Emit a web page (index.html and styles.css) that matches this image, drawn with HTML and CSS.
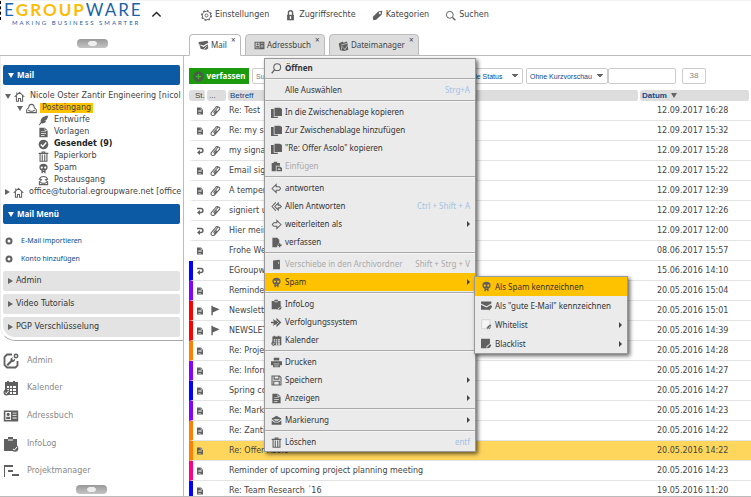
FILE: index.html
```html
<!DOCTYPE html>
<html lang="de">
<head>
    <meta charset="UTF-8">
    <meta name="viewport" content="width=device-width, initial-scale=1.0">
    <title>EGroupware - Mail</title>
    <link rel="stylesheet" href="styles.css">
</head>
<body>

    <svg class="sprite" aria-hidden="true">
        <symbol id="gear" viewBox="0 0 16 16"><circle cx="8" cy="8" r="6.2" fill="none" stroke="currentColor" stroke-width="1.4"/><circle cx="8" cy="8" r="7.2" fill="none" stroke="currentColor" stroke-width="1.6" stroke-dasharray="2.6 3"/><circle cx="8" cy="8" r="2.2" fill="none" stroke="currentColor" stroke-width="1.3"/></symbol>
        <symbol id="lock" viewBox="0 0 16 16"><path d="M3 7h10v8H3z"/><path d="M5 8V4a3 3 0 0 1 6 0v4" fill="none" stroke="currentColor" stroke-width="2"/><path d="M7 9h2v4H7z" fill="#fff"/></symbol>
        <symbol id="tag" viewBox="0 0 16 16"><path fill-rule="evenodd" d="M15 1 9 2 1 10l1 5 4-1 8-7zM11.500 3a1.500 1.500 0 1 1 0 3 1.500 1.500 0 0 1 0-3z"/></symbol>
        <symbol id="search" viewBox="0 0 16 16"><circle cx="7" cy="7" r="5" fill="none" stroke="currentColor" stroke-width="1.4"/><path d="m11 11 4 4" stroke="currentColor" stroke-width="2"/></symbol>
        <symbol id="find" viewBox="0 0 16 16"><circle cx="9" cy="6" r="5" fill="none" stroke="currentColor" stroke-width="1.5"/><path d="m5 10-4 5" stroke="currentColor" stroke-width="2"/></symbol>
        <symbol id="mail" viewBox="0 0 16 16"><path d="m1 3 13-2 1 3-7 4-7-2z"/><path d="m2 7 6 3 6-4 1 6-3 2-8-1z"/><path d="m9 13 4-4" stroke="#fff" stroke-width="1.200"/></symbol>
        <symbol id="card" viewBox="0 0 20 16"><path fill-rule="evenodd" d="M1 1h18v14H1zm2 2v10h7V3zm9 1v1h5V4zm0 3v1h5V7zm0 3v1h5v-1z"/><circle cx="6.500" cy="6" r="2"/><path d="M4 12V9h5v3z"/></symbol>
        <symbol id="files" viewBox="0 0 16 16"><path d="m1 5 6-3 1 2 5-2 1 4 1 8-6 2-6-1z"/><path d="m5 7 8-2M6 8l-1 6m3-3 2 3 4-6" fill="none" stroke="#ddd"/></symbol>
        <symbol id="home" viewBox="0 0 16 16"><path d="M1 8.500 8 2l7 6.500M3.500 7v8h3v-4h3v4h3V7M4 5V2" fill="none" stroke="currentColor" stroke-width="1.500"/></symbol>
        <symbol id="inbox" viewBox="0 0 16 16"><path d="M1 10c0-2 2-2 3-3 0-3 1-5 4-5s4 2 4 5c1 1 3 1 3 3v4H1zm2 0 3 2h4l3-2" fill="none" stroke="currentColor" stroke-width="1.500"/></symbol>
        <symbol id="quill" viewBox="0 0 16 16"><path d="M15 1C8 1 3 5 4 10l-3 5h1.500L5 12c5 1 6-2 7-4l-3 .5 4-2z"/></symbol>
        <symbol id="doc" viewBox="0 0 16 16"><path fill-rule="evenodd" d="M2 1h8l4 4v10H2zm2.500 5v1h7V6zm0 3v1h7V9zm0 3v1h5v-1z"/><path d="M10 1v4h4" fill="none" stroke="#eee"/></symbol>
        <symbol id="check" viewBox="0 0 16 16"><circle cx="8" cy="8" r="7"/><path d="m4 8 3 3 5-6" fill="none" stroke="#fff" stroke-width="2"/></symbol>
        <symbol id="trash" viewBox="0 0 16 16"><path d="M1 3.500h14M6 3V1.500h4V3M3 4v11h10V4M6.200 5v9M9.800 5v9" fill="none" stroke="currentColor" stroke-width="1.600"/></symbol>
        <symbol id="skull" viewBox="0 0 16 16"><path fill-rule="evenodd" d="M8 1c4 0 6 2 6 5 0 2-1 4-3 5v4H9v-2H7v2H5v-4C3 10 2 8 2 6c0-3 2-5 6-5zM5.500 5a1.600 1.600 0 1 0 0 3.200 1.600 1.600 0 0 0 0-3.200zm5 0a1.600 1.600 0 1 0 0 3.200 1.600 1.600 0 0 0 0-3.200zM7 10h2v1H7z"/></symbol>
        <symbol id="outbox" viewBox="0 0 16 16"><path d="M2 6c2-5 10-5 12 0l-3 1 3 3v4H2v-4l3-3zM2 10l4 2h4l4-2" fill="none" stroke="currentColor" stroke-width="1.600"/></symbol>
        <symbol id="dot" viewBox="0 0 16 16"><circle cx="8" cy="8" r="5" fill="none" stroke="currentColor" stroke-width="4"/></symbol>
        <symbol id="admin" viewBox="0 0 16 16"><path d="M9 1.500H4L1.500 4v8L4 14.500h8.500l2-2V8" fill="none" stroke="currentColor" stroke-width="1.800"/><path d="m5 13-1.500-1.500 4-4C7 5 9 4 10 4.500L9 6l1.500 1L12 5.500c.5 2-1 4-3 3.500z"/><circle cx="13" cy="3" r="1.700" fill="none" stroke="currentColor" stroke-width="1.500"/></symbol>
        <symbol id="calendar" viewBox="0 0 16 16"><path fill-rule="evenodd" d="M2 2h2V1h2v1h4V1h2v1h3v13H2zm2 4v2h2V6zm3 0v2h2V6zm3 0v2h3V6zM4 9v2h2V9zm3 0v2h2V9zm3 0v2h3V9zm-3 3v2h2v-2zm3 0v2h3v-2z"/><circle cx="3.500" cy="12.500" r="3"/><path d="m2 12.500 1.300 1.300L5.500 11" fill="none" stroke="#fff"/></symbol>
        <symbol id="clipboard" viewBox="0 0 16 16"><path d="M1 3h4V1h5v2h4v7l-3 1-1 4H1z"/><circle cx="12" cy="12.500" r="3.300"/><path d="m10 13 1.500 1L14 11M5 4h5" fill="none" stroke="#fff"/></symbol>
        <symbol id="gantt" viewBox="0 0 16 16"><path d="M1 2h1v12H1zM1 2h9v2H1zM5 7h5v2H5zM9 11h7v2H9z"/></symbol>
        <symbol id="plus" viewBox="0 0 16 16"><circle cx="8" cy="8" r="7.500" fill="#4c5a49"/><path d="M8 4v8M4 8h8" stroke="#35b828" stroke-width="2"/></symbol>
        <symbol id="clip" viewBox="0 0 16 16"><path d="m5 11 6-7c2-2 4 0 3 2l-7 8c-3 3-7 0-5-3l6-7c1-2 3-2 4-1m-2 5-4 5" fill="none" stroke="currentColor" stroke-width="1.500"/></symbol>
        <symbol id="reply" viewBox="0 0 16 16"><path d="M2 3h8c5 0 5 8 0 8H7" fill="none" stroke="currentColor" stroke-width="3"/><path d="M8 6v10l-6-5z"/></symbol>
        <symbol id="flag" viewBox="0 0 16 16"><path d="M2 1h2v14H2zM4 2l10 4-10 5z"/></symbol>
        <symbol id="copy" viewBox="0 0 16 16"><path d="M0 3h4v11h6v2H0z"/><path d="M5 1h8l3 2v10H5z"/></symbol>
        <symbol id="paste" viewBox="0 0 16 16"><path d="M1 3h3V1h5v2h4v4H7v8H1z"/><path fill-rule="evenodd" d="M8 8h5l3 2v5H8zm2 2v1h3v-1zm0 2v1h4v-1z"/></symbol>
        <symbol id="left" viewBox="0 0 16 16"><path d="m1.500 8 6-6v3.500H12L14 8l-2 2.500H7.500V14z" fill="none" stroke="currentColor" stroke-width="1.500"/></symbol>
        <symbol id="left2" viewBox="0 0 16 16"><path d="M7 2 1.500 8 7 14m-1.500-6 5-5v3H13l2 2-2 2h-2.500v3z" fill="none" stroke="currentColor" stroke-width="1.500"/></symbol>
        <symbol id="right" viewBox="0 0 16 16"><path d="m14.500 8-6-6v3.500H4L2 8l2 2.500h4.500V14z" fill="none" stroke="currentColor" stroke-width="1.500"/></symbol>
        <symbol id="compose" viewBox="0 0 16 16"><path d="M2 1h7l3 3v5l-3 3v3H2z"/><path d="M12.500 9v6m-3-3h6" stroke="currentColor" stroke-width="2"/></symbol>
        <symbol id="archive" viewBox="0 0 16 16"><path d="m3 2 9-1 1 1v13H3z"/><path d="M11 4v3" stroke="#eee"/></symbol>
        <symbol id="tracker" viewBox="0 0 16 16"><path d="m8 1 7 7-7 7v-4H6l-3 2 1-4H0V7h4L3 3l3 2h2z"/><path d="m8 5 3 3-3 3" fill="none" stroke="#eee" stroke-width="1.200"/></symbol>
        <symbol id="print" viewBox="0 0 16 16"><path d="M4 1h8v4H4zM0 6h16v6h-3v3H3v-3H0z"/><path d="M4 10h8M5 13h6" stroke="#eee"/></symbol>
        <symbol id="save" viewBox="0 0 16 16"><path d="M1.500 1.500h11l2 2v11h-13zM4.500 2v4h7V2M4 14V9h8v5" fill="none" stroke="currentColor" stroke-width="1.600"/></symbol>
        <symbol id="envelope" viewBox="0 0 16 16"><path d="M8 1 1 5v1h14V5zM1 8l4 3h6l4-3v6H1z"/><path d="m2 6 4 3h4l4-3" fill="none" stroke="currentColor" stroke-width="1.500"/></symbol>
        <symbol id="goodmail" viewBox="0 0 16 16"><path d="M0 2h15v3L8 9 0 5zM0 7l8 4 7-4v3l-4 4H0z"/><path d="m10 12 2 2 4-5" fill="none" stroke="currentColor" stroke-width="1.500"/></symbol>
        <symbol id="white" viewBox="0 0 16 16"><path d="M1 1h12v13H1z" fill="#f5f5f5" stroke="#ccc"/><path d="M8 12.500 13 8l2 1-2 5-4 1z"/><path d="m9 13 2 1 3-4" fill="none" stroke="#eee"/></symbol>
        <symbol id="black" viewBox="0 0 16 16"><path d="M0 1h13v7l-5 4v3H0z"/><path d="m9 13 4-4 2 1-2 4-4 1z"/></symbol>
        <symbol id="up" viewBox="0 0 16 16"><path d="m2 11 6-6 6 6" fill="none" stroke="currentColor" stroke-width="2"/></symbol>
    </svg>

    <div class="app">
        <header class="top">
            <div class="brand">
                <div class="logo">
                    <div class="logo-name">E<b>GROUP</b>WARE</div>
                    <div class="logo-claim">MAKING BUSINESS SMARTER</div>
                </div>
                <button class="collapse" aria-label="Kopfzeile einklappen"><svg class="icon"><use href="#up"/></svg></button>
                <button class="grip grip-top" aria-label="Seitenleiste"></button>
            </div>
            <div class="top-main">
                <nav class="top-nav">
                    <a href="#"><svg class="icon"><use href="#gear"/></svg>Einstellungen</a>
                    <a href="#"><svg class="icon"><use href="#lock"/></svg>Zugriffsrechte</a>
                    <a href="#"><svg class="icon"><use href="#tag"/></svg>Kategorien</a>
                    <a href="#"><svg class="icon"><use href="#search"/></svg>Suchen</a>
                </nav>
                <div class="tabs">
                    <div class="tab active"><a href="#"><svg class="icon"><use href="#mail"/></svg>Mail</a><button class="close" aria-label="Mail schließen">×</button></div>
                    <div class="tab"><a href="#"><svg class="icon"><use href="#card"/></svg>Adressbuch</a><button class="close" aria-label="Adressbuch schließen">×</button></div>
                    <div class="tab"><a href="#"><svg class="icon"><use href="#files"/></svg>Dateimanager</a><button class="close" aria-label="Dateimanager schließen">×</button></div>
                </div>
            </div>
        </header>

        <div class="body">
            <aside class="sidebar">
                <div class="sidebox">
                    <button class="bar open"><span class="tri down"></span>Mail</button>
                    <ul class="tree">
                        <li><span class="tri down"></span><svg class="icon"><use href="#home"/></svg><a href="#">Nicole Oster Zantir Engineering [nicol</a></li>
                        <li class="level1"><span class="tri down"></span><svg class="icon"><use href="#inbox"/></svg><a href="#" class="current">Posteingang</a></li>
                        <li class="level2"><svg class="icon"><use href="#quill"/></svg><a href="#">Entwürfe</a></li>
                        <li class="level2"><svg class="icon"><use href="#doc"/></svg><a href="#">Vorlagen</a></li>
                        <li class="level2"><svg class="icon"><use href="#check"/></svg><a href="#" class="unread">Gesendet (9)</a></li>
                        <li class="level2"><svg class="icon"><use href="#trash"/></svg><a href="#">Papierkorb</a></li>
                        <li class="level2"><svg class="icon"><use href="#skull"/></svg><a href="#">Spam</a></li>
                        <li class="level2"><svg class="icon"><use href="#outbox"/></svg><a href="#">Postausgang</a></li>
                        <li><span class="tri"></span><svg class="icon"><use href="#home"/></svg><a href="#">office@tutorial.egroupware.net [office</a></li>
                    </ul>
                    <button class="bar open"><span class="tri down"></span>Mail Menü</button>
                    <ul class="links">
                        <li><svg class="icon"><use href="#dot"/></svg><a href="#">E-Mail importieren</a></li>
                        <li><svg class="icon"><use href="#dot"/></svg><a href="#">Konto hinzufügen</a></li>
                    </ul>
                    <button class="bar"><span class="tri"></span>Admin</button>
                    <button class="bar"><span class="tri"></span>Video Tutorials</button>
                    <button class="bar last"><span class="tri"></span>PGP Verschlüsselung</button>
                </div>
                <nav class="apps">
                    <a href="#"><svg class="icon"><use href="#admin"/></svg>Admin</a>
                    <a href="#"><svg class="icon"><use href="#calendar"/></svg>Kalender</a>
                    <a href="#"><svg class="icon"><use href="#card"/></svg>Adressbuch</a>
                    <a href="#"><svg class="icon"><use href="#clipboard"/></svg>InfoLog</a>
                    <a href="#"><svg class="icon"><use href="#gantt"/></svg>Projektmanager</a>
                </nav>
                <button class="grip" aria-label="Anwendungen"></button>
            </aside>

            <main class="content">
                <div class="toolbar">
                    <button class="compose"><svg class="icon"><use href="#plus"/></svg>verfassen</button>
                    <input class="search" type="text" placeholder="Suche" aria-label="Suche">
                    <select class="status" aria-label="Status"><option>Alle Status</option></select>
                    <div class="joined">
                        <select class="preview" aria-label="Vorschau"><option>Ohne Kurzvorschau</option></select>
                        <input class="filter" type="text" aria-label="Filter">
                    </div>
                    <span class="total">38</span>
                </div>

                <table class="mails">
                    <thead>
                        <tr><th class="col-status">St.</th><th class="col-att">...</th><th class="col-subject"><a href="#">Betreff</a></th><th class="col-date"><a href="#">Datum</a><span class="tri down"></span></th></tr>
                    </thead>
                    <tbody>
                        <tr><td><svg class="icon"><use href="#doc"/></svg></td><td><svg class="icon"><use href="#clip"/></svg></td><td>Re: Test</td><td>12.09.2017 16:28</td></tr>
                        <tr><td><svg class="icon"><use href="#doc"/></svg></td><td><svg class="icon"><use href="#clip"/></svg></td><td>Re: my signature</td><td>12.09.2017 15:32</td></tr>
                        <tr><td><svg class="icon"><use href="#reply"/></svg></td><td><svg class="icon"><use href="#clip"/></svg></td><td>my signature</td><td>12.09.2017 15:28</td></tr>
                        <tr><td><svg class="icon"><use href="#doc"/></svg></td><td><svg class="icon"><use href="#clip"/></svg></td><td>Email signature</td><td>12.09.2017 15:22</td></tr>
                        <tr><td><svg class="icon"><use href="#doc"/></svg></td><td><svg class="icon"><use href="#clip"/></svg></td><td>A temperature</td><td>12.09.2017 12:39</td></tr>
                        <tr><td><svg class="icon"><use href="#reply"/></svg></td><td><svg class="icon"><use href="#clip"/></svg></td><td>signiert und</td><td>12.09.2017 12:26</td></tr>
                        <tr><td><svg class="icon"><use href="#reply"/></svg></td><td><svg class="icon"><use href="#clip"/></svg></td><td>Hier meine</td><td>12.09.2017 12:00</td></tr>
                        <tr><td><svg class="icon"><use href="#doc"/></svg></td><td></td><td>Frohe Weihnachten</td><td>08.06.2017 15:57</td></tr>
                        <tr class="blue"><td><svg class="icon"><use href="#reply"/></svg></td><td></td><td>EGroupware</td><td>15.06.2016 14:10</td></tr>
                        <tr class="violet"><td><svg class="icon"><use href="#doc"/></svg></td><td></td><td>Reminder</td><td>20.05.2016 15:04</td></tr>
                        <tr class="red"><td><svg class="icon"><use href="#doc"/></svg></td><td><svg class="icon"><use href="#flag"/></svg></td><td>Newsletter</td><td>20.05.2016 15:01</td></tr>
                        <tr class="red"><td><svg class="icon"><use href="#doc"/></svg></td><td><svg class="icon"><use href="#flag"/></svg></td><td>NEWSLETTER</td><td>20.05.2016 14:39</td></tr>
                        <tr class="orange"><td><svg class="icon"><use href="#doc"/></svg></td><td></td><td>Re: Project</td><td>20.05.2016 14:28</td></tr>
                        <tr class="violet"><td><svg class="icon"><use href="#doc"/></svg></td><td></td><td>Re: Information</td><td>20.05.2016 14:27</td></tr>
                        <tr class="blue"><td><svg class="icon"><use href="#doc"/></svg></td><td></td><td>Spring collection</td><td>20.05.2016 14:27</td></tr>
                        <tr class="violet"><td><svg class="icon"><use href="#doc"/></svg></td><td></td><td>Re: Marketing</td><td>20.05.2016 14:23</td></tr>
                        <tr class="orange"><td><svg class="icon"><use href="#doc"/></svg></td><td></td><td>Re: Zantir</td><td>20.05.2016 14:22</td></tr>
                        <tr class="orange selected"><td><svg class="icon"><use href="#doc"/></svg></td><td></td><td>Re: Offer Asolo</td><td>20.05.2016 14:22</td></tr>
                        <tr class="pink"><td><svg class="icon"><use href="#doc"/></svg></td><td></td><td>Reminder of upcoming project planning meeting</td><td>20.05.2016 14:23</td></tr>
                        <tr class="blue"><td><svg class="icon"><use href="#doc"/></svg></td><td></td><td>Re: Team Research ´16</td><td>19.05.2016 11:20</td></tr>
                    </tbody>
                </table>
            </main>
        </div>
    </div>

    <div class="menu context">
        <button class="default"><svg class="icon"><use href="#find"/></svg>Öffnen</button>
        <hr>
        <button><svg class="icon"></svg>Alle Auswählen<kbd>Strg+A</kbd></button>
        <hr>
        <button><svg class="icon"><use href="#copy"/></svg>In die Zwischenablage kopieren</button>
        <button><svg class="icon"><use href="#copy"/></svg>Zur Zwischenablage hinzufügen</button>
        <button><svg class="icon"><use href="#copy"/></svg>"Re: Offer Asolo" kopieren</button>
        <button disabled><svg class="icon"><use href="#paste"/></svg>Einfügen</button>
        <hr>
        <button><svg class="icon"><use href="#left"/></svg>antworten</button>
        <button><svg class="icon"><use href="#left2"/></svg>Allen Antworten<kbd>Ctrl + Shift + A</kbd></button>
        <button class="more"><svg class="icon"><use href="#right"/></svg>weiterleiten als</button>
        <button><svg class="icon"><use href="#compose"/></svg>verfassen</button>
        <hr>
        <button disabled><svg class="icon"><use href="#archive"/></svg>Verschiebe in den Archivordner<kbd>Shift + Strg + V</kbd></button>
        <button class="more hover"><svg class="icon"><use href="#skull"/></svg>Spam</button>
        <hr>
        <button><svg class="icon"><use href="#clipboard"/></svg>InfoLog</button>
        <button><svg class="icon"><use href="#tracker"/></svg>Verfolgungssystem</button>
        <button><svg class="icon"><use href="#calendar"/></svg>Kalender</button>
        <hr>
        <button><svg class="icon"><use href="#print"/></svg>Drucken</button>
        <button class="more"><svg class="icon"><use href="#save"/></svg>Speichern</button>
        <button class="more"><svg class="icon"><use href="#doc"/></svg>Anzeigen</button>
        <hr>
        <button class="more"><svg class="icon"><use href="#envelope"/></svg>Markierung</button>
        <hr>
        <button><svg class="icon"><use href="#trash"/></svg>Löschen<kbd>entf</kbd></button>
    </div>

    <div class="menu submenu">
        <button class="hover"><svg class="icon"><use href="#skull"/></svg>Als Spam kennzeichnen</button>
        <button><svg class="icon"><use href="#goodmail"/></svg>Als "gute E-Mail" kennzeichnen</button>
        <button class="more"><svg class="icon"><use href="#white"/></svg>Whitelist</button>
        <button class="more"><svg class="icon"><use href="#black"/></svg>Blacklist</button>
    </div>

</body>
</html>
```

FILE: styles.css
```css
* {
    box-sizing: border-box;
}

body {
    margin: 0;
    font-family: "DejaVu Sans", Verdana, sans-serif;
    font-size: 8px;
    line-height: 12px;
    color: #444;
    background: #fff;
    overflow: hidden;
}

a {
    color: inherit;
    text-decoration: none;
}

button {
    font: inherit;
    color: inherit;
    border: none;
    padding: 0;
    cursor: pointer;
}

ul {
    list-style: none;
    margin: 0;
    padding: 0;
}

.sprite {
    display: none;
}

.icon {
    width: 11px;
    height: 11px;
    flex: none;
    color: #606060;
    fill: currentColor;
}

.tri {
    flex: none;
    border: solid transparent;
    border-width: 3px 0 3px 5px;
    border-left-color: #666;
}

.tri.down {
    border-width: 5px 3px 0;
    border-color: #666 transparent transparent;
}

.app {
    display: flex;
    flex-direction: column;
    height: 100vh;
    border-bottom: 1px solid #bbb;
}

/* header */
.top {
    display: flex;
    flex: none;
    height: 56px;
    border-top: 1px solid #f2f2f2;
    border-bottom: 1px solid #bbb;
}

.brand {
    display: grid;
    grid-template-columns: 148px 1fr;
    grid-template-rows: 26px 1fr;
    flex: none;
    width: 184px;
}

.logo {
    padding-left: 3px;
    border-left: 1px dashed #000;
    height: 19px;
}

.logo-name {
    font-family: Lato, sans-serif;
    font-size: 17px;
    line-height: 18px;
    letter-spacing: 2px;
    color: #1b64a7;
}

.logo-name b {
    color: #fdbb05;
}

.logo-claim {
    padding-left: 8px;
    font-family: Lato, sans-serif;
    font-size: 6px;
    line-height: 7px;
    letter-spacing: 2px;
    white-space: nowrap;
    color: #1b64a7;
}

.collapse {
    display: flex;
    align-items: center;
    padding-left: 3px;
    background: none;
}

.collapse .icon {
    color: #222;
}

.grip {
    flex: none;
    align-self: center;
    width: 31px;
    height: 9px;
    border-radius: 4px;
    background: radial-gradient(ellipse 5px 3px, #eee 80%, transparent), linear-gradient(#999, #c4c4c4);
}

.grip-top {
    grid-column: 1 / -1;
    justify-self: center;
    margin-top: 4px;
}

.top-main {
    display: flex;
    flex-direction: column;
    justify-content: space-between;
    flex: 1;
    padding-left: 5px;
}

.top-nav {
    display: flex;
    gap: 16px;
    padding: 8px 0 0 12px;
}

.top-nav a {
    display: flex;
    align-items: center;
    gap: 3px;
}

.tabs {
    display: flex;
    gap: 4px;
    margin-bottom: -1px;
    font-family: "Noto Sans", sans-serif;
}

.tab {
    display: flex;
    align-items: flex-start;
    height: 22px;
    padding-left: 8px;
    border: 1px solid #bbb;
    border-radius: 4px 4px 0 0;
    background: #ddd;
}

.tab.active {
    background: #fff;
    border-bottom-color: #fff;
}

.tab a {
    display: flex;
    align-items: center;
    gap: 2px;
    padding-top: 4px;
}

.close {
    width: 13px;
    line-height: 9px;
    background: none;
}

/* sidebar */
.body {
    display: flex;
    flex: 1;
    min-height: 0;
}

.sidebar {
    display: flex;
    flex-direction: column;
    flex: none;
    width: 184px;
    border-right: 1px solid #bbb;
}

.sidebox {
    padding: 9px 3px 3px 2px;
    border-bottom: 1px solid #aaa;
    border-left: 1px solid #eee;
    border-bottom-left-radius: 15px;
}

.bar {
    display: flex;
    align-items: center;
    gap: 3px;
    width: 100%;
    height: 20px;
    margin-bottom: 3px;
    padding-left: 5px;
    border-radius: 2px;
    background: #e3e3e3;
    color: #333;
}

.bar.open {
    background: #0c5aa4;
    color: #fff;
    font-family: "Noto Sans", sans-serif;
    font-weight: bold;
}

.bar .tri.down {
    border-top-color: #fff;
}

.bar.last {
    margin-bottom: 0;
    border-bottom-left-radius: 12px;
}

.tree {
    padding: 2px 0 6px 2px;
}

.tree li {
    display: flex;
    align-items: center;
    height: 12px;
    gap: 3px;
    white-space: nowrap;
}

.tree a {
    padding: 0 2px;
    line-height: 10px;
}

.tree .level1 {
    padding-left: 12px;
}

.tree .level2 {
    padding-left: 33px;
}

.tree .current {
    background: #ffc200;
}

.tree .unread {
    font-weight: bold;
    color: #222;
}

.links {
    padding: 5px 0 3px 2px;
    font-family: "Noto Sans", sans-serif;
    font-size: 7px;
    color: #0c4a8a;
}

.links li {
    display: flex;
    align-items: center;
    gap: 8px;
    height: 18px;
}

.links .icon {
    width: 8px;
    height: 8px;
}

.apps {
    display: flex;
    flex-direction: column;
    flex: 1;
    justify-content: space-around;
    padding: 6px 0 0 3px;
    color: #888;
}

.apps a {
    display: flex;
    align-items: center;
    gap: 8px;
}

.apps .icon {
    width: 16px;
    height: 16px;
}

.sidebar > .grip {
    margin-bottom: 2px;
}

/* mail list */
.content {
    flex: 1;
    min-width: 0;
    padding: 12px 0 0 5px;
    overflow: hidden;
}

.toolbar {
    display: flex;
    gap: 3px;
    height: 16px;
    margin-bottom: 6px;
}

.toolbar input,
.toolbar select,
.total {
    height: 16px;
    padding: 0 3px;
    border: 1px solid #ccc;
    border-radius: 2px;
    background-color: #fff;
    font: 7px "Liberation Sans", Arial, sans-serif;
    color: #0c4a8a;
}

.toolbar select {
    appearance: none;
    background: linear-gradient(to bottom right, #666 50%, transparent 50%) no-repeat right 4px center / 3px 4px, linear-gradient(to bottom left, #666 50%, transparent 50%) no-repeat right 7px center / 3px 4px, #fff;
}

.compose {
    display: flex;
    align-items: center;
    justify-content: center;
    gap: 3px;
    width: 60px;
    background: #1a9a0c;
    color: #fff;
    font-family: "Noto Sans", sans-serif;
    font-weight: bold;
}

.search {
    width: 210px;
}

.status {
    width: 58px;
}

.joined {
    display: flex;
}

.preview {
    width: 82px;
}

.filter {
    width: 68px;
}

.toolbar .total {
    margin-left: 3px;
    width: 24px;
    font-size: 8px;
    line-height: 14px;
    text-align: center;
    color: #888;
}

.mails {
    width: 100%;
    table-layout: fixed;
    border-collapse: separate;
    border-spacing: 0;
}

.mails th {
    padding: 0 2px;
    border-right: 2px solid #fff;
    border-radius: 3px;
    background: #ddd;
    background-clip: padding-box;
    font: 8px/11px "Liberation Sans", Arial, sans-serif;
    text-align: left;
}

.mails th a {
    color: #0c4a8a;
}

.mails .col-status {
    width: 18px;
    padding-left: 6px;
}

.col-att {
    width: 21px;
}

.mails .col-date {
    width: 111px;
    font-weight: bold;
}

.mails .col-date .tri {
    display: inline-block;
    margin-left: 4px;
}

.mails td {
    height: 20px;
    padding: 0 1px;
    border-bottom: 1px solid #e4e4e4;
    white-space: nowrap;
}

.mails td:first-child {
    padding-left: 3px;
    border-left: 4px solid transparent;
}

.mails td:last-child {
    padding-left: 17px;
}

.mails td .icon {
    display: block;
    width: 8px;
    height: 8px;
}

.mails td + td .icon {
    width: 11px;
    height: 11px;
    margin-left: 2px;
}

.mails .blue td:first-child { border-left-color: #00f; }
.mails .violet td:first-child { border-left-color: #80f; }
.mails .red td:first-child { border-left-color: #f00; }
.mails .orange td:first-child { border-left-color: #ff8000; }
.mails .pink td:first-child { border-left-color: #f08; }

.mails .selected {
    background: #ffd65c;
}

/* context menu */
.menu {
    position: absolute;
    border: 1px solid #999;
    background: #ebebeb;
    box-shadow: 2px 2px 4px rgba(0, 0, 0, 0.6);
    font-family: "Noto Sans", sans-serif;
    color: #333;
}

.context {
    left: 264px;
    top: 58px;
    width: 212px;
}

.submenu {
    left: 474px;
    top: 276px;
    width: 154px;
}

.menu button {
    display: flex;
    align-items: center;
    gap: 3px;
    width: 100%;
    height: 18px;
    padding: 0 5px 0 6px;
    background: none;
    text-align: left;
    white-space: nowrap;
}

.submenu button {
    height: 19px;
}

.menu hr {
    height: 2px;
    margin: 1px 0;
    border: none;
    border-top: 1px solid #aaa;
    background: #f4f4f4;
}

.menu .default {
    font-weight: bold;
}

.menu .hover {
    background: #ffc200;
}

.menu kbd {
    margin-left: auto;
    font: inherit;
    color: #a3c3e3;
}

.menu button:disabled,
.menu button:disabled kbd {
    color: #aaa;
}

.menu .more::after {
    content: "";
    margin-left: auto;
    border: solid transparent;
    border-width: 3px 0 3px 3px;
    border-left-color: #444;
}
```
